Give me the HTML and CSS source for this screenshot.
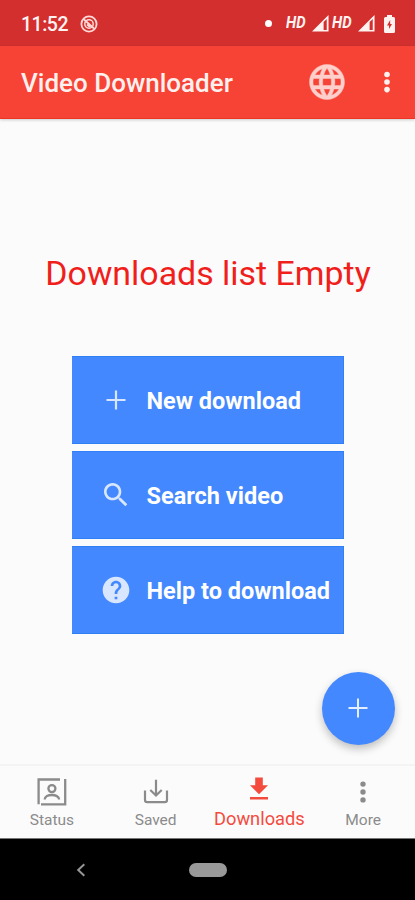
FILE: index.html
```html
<!DOCTYPE html>
<html lang="en">
<head>
<meta charset="utf-8">
<title>Video Downloader</title>
<link rel="stylesheet" href="styles.css">
</head>
<body>
<div class="screen">
  <header class="statusbar">
    <span class="clock">11:52</span>
    <svg class="notice" width="18" height="18" viewBox="0 0 18 18" fill="none" stroke="currentColor"><circle cx="9" cy="9" r="7.6" stroke-width="1.8"/><circle cx="9" cy="9" r="4.2" stroke-width="1.5"/><path d="M4 4.500 14 13.500M7 9.500l3 2.500" stroke-width="1.800"/></svg>
    <span class="dot"></span>
    <span class="hd">HD</span>
    <svg class="signal" width="17" height="17" viewBox="0 0 18 18"><path fill="currentColor" fill-rule="evenodd" d="M17.500 0v17.500H0zM12.300 7.500v8.500h3.300V4.200z"/></svg>
    <span class="hd hd-second">HD</span>
    <svg class="signal" width="17" height="17" viewBox="0 0 18 18"><path fill="currentColor" fill-rule="evenodd" d="M17.500 0v17.500H0zM12.300 7.500v8.500h3.300V4.200z"/></svg>
    <svg class="battery" width="11" height="18" viewBox="0 0 11 18"><path fill="currentColor" fill-rule="evenodd" d="M3 0h5v2h1.500Q11 2 11 3.500v13Q11 18 9.500 18h-8Q0 18 0 16.500v-13Q0 2 1.500 2H3zM6.200 5 3 10.500h2V14l3-5H6.200z"/></svg>
  </header>
  <div class="toolbar">
    <h1 class="title">Video Downloader</h1>
    <svg class="globe" width="42" height="42" viewBox="0 0 24 24" fill="currentColor"><path stroke="currentColor" stroke-width=".25" d="M11.990 2C6.470 2 2 6.480 2 12s4.470 10 9.990 10C17.520 22 22 17.520 22 12S17.520 2 11.990 2zm6.930 6h-2.950c-.32-1.250-.78-2.450-1.380-3.560 1.840.63 3.370 1.910 4.330 3.560zM12 4.040c.83 1.200 1.480 2.530 1.910 3.960h-3.820c.43-1.430 1.080-2.760 1.910-3.960zM4.260 14C4.100 13.360 4 12.690 4 12s.1-1.360.26-2h3.380c-.08.66-.14 1.320-.14 2s.06 1.340.14 2H4.260zm.82 2h2.950c.32 1.250.78 2.450 1.380 3.560-1.840-.63-3.370-1.900-4.330-3.560zm2.950-8H5.080c.96-1.660 2.490-2.930 4.330-3.560C8.810 5.550 8.350 6.750 8.030 8zM12 19.960c-.83-1.200-1.480-2.530-1.910-3.960h3.820c-.43 1.430-1.080 2.760-1.910 3.960zM14.340 14H9.660c-.09-.66-.16-1.320-.16-2s.07-1.350.16-2h4.680c.09.65.16 1.320.16 2s-.07 1.340-.16 2zm.25 5.560c.6-1.110 1.060-2.310 1.380-3.560h2.950c-.96 1.650-2.490 2.930-4.330 3.560zM16.360 14c.08-.66.140-1.320.14-2s-.06-1.340-.14-2h3.380c.16.64.26 1.310.26 2s-.1 1.360-.26 2h-3.380z"/></svg>
    <svg class="overflow" width="6" height="24" viewBox="0 0 6 24" fill="currentColor"><circle cx="3" cy="4.500" r="2.800"/><circle cx="3" cy="12" r="2.800"/><circle cx="3" cy="19.600" r="2.800"/></svg>
  </div>
  <main class="content">
    <h2 class="empty">Downloads list Empty</h2>
    <div class="actions">
      <div class="action"><svg width="38" height="38" viewBox="0 0 24 24"><path fill="currentColor" d="M18 12.700h-5.300V18h-1.400v-5.300H6v-1.400h5.300V6h1.400v5.300H18z"/></svg><span>New download</span></div>
      <div class="action"><svg width="32" height="32" viewBox="0 0 24 24"><path fill="currentColor" d="M15.500 14h-.79l-.28-.27C15.410 12.590 16 11.110 16 9.500 16 5.910 13.090 3 9.500 3S3 5.910 3 9.500 5.910 16 9.500 16c1.610 0 3.090-.59 4.230-1.570l.27.28v.79l5 4.990L20.490 19l-4.990-5zm-6 0C7.010 14 5 11.990 5 9.500S7.010 5 9.500 5 14 7.010 14 9.500 11.990 14 9.500 14z"/></svg><span>Search video</span></div>
      <div class="action"><svg width="32" height="32" viewBox="0 0 24 24"><path fill="currentColor" d="M12 2C6.480 2 2 6.480 2 12s4.480 10 10 10 10-4.480 10-10S17.520 2 12 2zm1 17h-2v-2h2v2zm2.070-7.750l-.9.920C13.450 12.900 13 13.500 13 15h-2v-.5c0-1.100.45-2.100 1.170-2.830l1.240-1.260c.37-.36.59-.86.59-1.410 0-1.100-.9-2-2-2s-2 .9-2 2H8c0-2.210 1.790-4 4-4s4 1.790 4 4c0 .88-.36 1.680-.93 2.250z"/></svg><span>Help to download</span></div>
    </div>
    <div class="fab"><svg width="20" height="20" viewBox="0 0 20 20"><path fill="currentColor" d="M9 .5h2V9h8.500v2H11v8.500H9V11H.5V9H9z"/></svg></div>
  </main>
  <nav class="tabs">
    <div class="tab"><svg width="30" height="28" viewBox="0 0 30 28" fill="none" stroke="currentColor" stroke-width="2.300"><path d="M23 1.500H1.600v24.800M4 26.300h24.200V1"/><circle cx="14.900" cy="10.600" r="3.500"/><path d="M7.700 21.500c0-6 14.400-6 14.400 0"/></svg><span>Status</span></div>
    <div class="tab tab-saved"><svg width="26" height="26" viewBox="0 0 26 26" fill="none" stroke="currentColor" stroke-width="2.200"><path d="M13 .8v15M7.300 11l5.700 5.500 5.700-5.500M2 11.500V21q0 2.200 2.200 2.200h17.600Q24 23.200 24 21v-9.500"/></svg><span>Saved</span></div>
    <div class="tab active"><svg width="20" height="24" viewBox="0 0 20 24" fill="currentColor"><path d="M6.200.5h7.600v7.800H19l-9 9-9-9h5.200zM1 20.100h18v2.300H1z"/></svg><span>Downloads</span></div>
    <div class="tab"><svg width="6" height="24" viewBox="0 0 6 24" fill="currentColor"><circle cx="3" cy="4.100" r="2.700"/><circle cx="3" cy="12" r="2.700"/><circle cx="3" cy="19.900" r="2.700"/></svg><span>More</span></div>
  </nav>
  <footer class="system">
    <svg class="back" width="10" height="14" viewBox="0 0 10 14" fill="none" stroke="currentColor" stroke-width="2"><path d="M8.300 1.200 2.200 7l6.100 5.800"/></svg>
    <span class="home"></span>
  </footer>
</div>
</body>
</html>
```
FILE: styles.css
```css
* { box-sizing: border-box; }
body { margin: 0; font-family: Roboto, "Liberation Sans", sans-serif; }
svg { display: block; flex: none; }
h1, h2 { margin: 0; }
.screen { width: 415px; height: 900px; display: flex; flex-direction: column; background: #fbfbfb; overflow: hidden; }

.statusbar { height: 46px; flex: none; display: flex; align-items: center; padding: 1px 20px 0 21px; background: #d32f2f; color: #fff3f1; }
.clock { width: 47px; padding-top: 2px; font-size: 19.500px; font-weight: 500; line-height: 24px; letter-spacing: -0.500px; white-space: nowrap; }
.notice { margin-left: 12px; color: #ffd9d6; }
.dot { width: 7px; height: 7px; margin-left: auto; margin-top: -1px; border-radius: 50%; background: #fff; }
.hd { width: 20px; margin: -2px 0 0 14px; font-size: 16px; font-weight: 700; font-style: italic; line-height: 20px; white-space: nowrap; transform: scaleX(.93); transform-origin: left; }
.signal { margin-left: 6px; }
.hd-second { margin-left: 3px; }
.battery { margin-left: 9px; }

.toolbar { height: 72.500px; flex: none; display: flex; align-items: center; padding: 0 25.500px 0 21px; background: #f64336; color: #fff; border-bottom: 1px solid #ee3422; box-shadow: 0 1px 3px rgba(0, 0, 0, .2); }
.title { font-size: 26px; font-weight: 500; line-height: 32px; padding-top: 2px; color: #fff0ee; white-space: nowrap; }
.globe { margin-left: auto; color: #ffcfcb; }
.overflow { margin-left: 35.500px; color: #fff1ef; }

.content { flex: 1; display: flex; flex-direction: column; align-items: center; min-height: 0; }
.empty { margin-top: 135px; padding-left: 1px; color: #f01f1c; font-size: 33.900px; font-weight: 400; line-height: 40px; white-space: nowrap; }
.actions { width: 272px; margin: 62px 0 0; display: flex; flex-direction: column; gap: 7px; }
.action { height: 88px; display: grid; grid-template-columns: 38px 1fr; align-items: center; justify-items: start; column-gap: 12px; padding: 0 0 0 25px; background: #4388fe; border: solid #2f7ff5; border-width: 1px 1px 1px 0; color: #fff; }
.action svg { justify-self: center; color: #d8e6ff; }
.action span { padding-top: 2px; font-size: 23.500px; font-weight: 700; line-height: 30px; white-space: nowrap; }
.fab { width: 73px; height: 73px; margin: 38px 20.500px 0 auto; flex: none; display: flex; align-items: center; justify-content: center; border-radius: 50%; background: #4388fe; color: #e4eeff; box-shadow: 0 4px 8px rgba(0, 0, 0, .24); }

.tabs { height: 74px; flex: none; display: flex; background: #fbfbfb; border-top: 2px solid #f4f4f4; }
.tab { flex: 1; display: grid; grid-template-rows: 42px 16px; justify-items: center; align-items: center; align-content: start; padding-top: 4px; color: #8b8b8b; }
.tab span { font-size: 15.500px; line-height: 20px; white-space: nowrap; }
.tab svg { margin-top: 1px; }
.tab.active { color: #f44b3f; }
.tab.active svg { margin-top: -4px; }
.tab.active span { margin-top: -2px; font-size: 18.300px; }
.system { height: 62px; flex: none; display: grid; grid-template-columns: 1fr 38px 1fr; align-items: center; background: #000; border-top: 1px solid #777; color: #969696; }
.back { margin-left: 76px; }
.home { height: 14px; border-radius: 7px; background: #999; }
```
